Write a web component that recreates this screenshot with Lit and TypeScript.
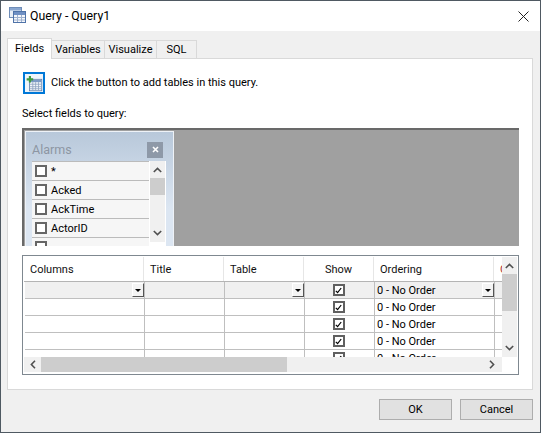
import { LitElement, html, css, svg } from "lit";
import { customElement } from "lit/decorators.js";

const chevron = (d: string) => html`<svg class="chev" width="9" height="6" viewBox="0 0 9 6"><path d=${d} fill="none" stroke="#505050" stroke-width="1.6"/></svg>`;
const up = () => chevron("M.8 5 4.5 1.4 8.2 5");
const down = () => chevron("M.8 1 4.5 4.6 8.2 1");
const side = (d: string) => html`<svg class="chev" width="6" height="9" viewBox="0 0 6 9"><path d=${d} fill="none" stroke="#505050" stroke-width="1.6"/></svg>`;

const gridIcon = svg`
  <rect x="5.5" y="6.5" width="15" height="14" fill="#f4f7fb" stroke="#5f7ea8"/>
  <rect x="6" y="7" width="14" height="3" fill="#7d9bc6"/>
  <path d="M6 12.5h14M6 15.5h14M6 18h14M9.5 10v10M13 10v10M16.5 10v10" stroke="#8ea3c0" stroke-width="1"/>`;

@customElement("app-root")
export class AppRoot extends LitElement {
  static styles = css`
    :host { display: block; width: 541px; height: 433px; font-family: Roboto, "Noto Sans", sans-serif; font-size: 11px; color: #000; }
    * { box-sizing: border-box; }
    .win { width: 541px; height: 433px; border: 1px solid #4f5962; background: #f0f0f0; display: flex; flex-direction: column; overflow: hidden; }
    .title { height: 30px; flex: none; background: #fff; display: flex; align-items: center; padding-left: 8px; gap: 4px; font-size: 12.3px; }
    .title .ico { margin-top: -3px; }
    .title .x { margin-left: auto; margin-right: 11px; display: flex; }
    .tabs { display: flex; align-items: flex-end; height: 27px; padding-left: 6px; flex: none; }
    .tab { height: 18px; background: #f0f0f0; border: 1px solid #d9d9d9; border-bottom: none; border-left: none; display: flex; align-items: center; justify-content: center; }
    .tab.on { height: 21px; width: 45px; background: #fff; border: 1px solid #d9d9d9; border-bottom: none; position: relative; top: 1px; z-index: 1; padding-bottom: 1px; }
    .panel { margin: 0 7px 0 6px; height: 332px; background: #fff; border: 1px solid #d9d9d9; flex: none; padding: 13px 13px 0 14px; }
    .hint { display: flex; align-items: center; gap: 6px; height: 22px; padding-bottom: 1px; padding-left: 1px; }
    .addbtn { width: 22px; height: 22px; border: 2px solid #0078d7; display: flex; align-items: center; justify-content: center; background: #eef5fc; flex: none; margin-bottom: -1px; }
    .lbl { margin-top: 12px; height: 16px; line-height: 16px; }
    .canvas { margin-top: 6px; width: 497px; height: 118px; background: #a0a0a0; border-top: 2px solid #696969; border-left: 2px solid #696969; padding: 1px 0 0 1px; overflow: hidden; }
    .fieldbox { width: 149px; height: 130px; background: linear-gradient(#b8c8da, #dce6f2 60%); border: 1px solid #eef2f7; padding: 9px 7px 0 6px; }
    .fb-head { display: flex; justify-content: space-between; align-items: center; height: 17px; padding-right: 3px; color: #8d96a3; font-size: 12.5px; }
    .fb-close { width: 16px; height: 16px; background: #8e99a8; display: flex; align-items: center; justify-content: center; }
    .list { margin-top: 3px; display: flex; background: #fff; width: 134px; height: 100px; padding-right: 1px; }
    .rows { width: 117px; border-top: 1px solid #bbb; }
    .frow { height: 19px; background: #f6f6f6; border-bottom: 1px solid #bbb; display: flex; align-items: center; padding-left: 3px; gap: 4px; }
    .fck { width: 12px; height: 12px; border: 2px solid #666; background: #fff; flex: none; }
    .vs { background: #f0f0f0; display: flex; flex-direction: column; align-items: center; width: 15px; flex: none; }
    .list .vs { margin-left: 1px; height: 81px; padding-top: 6px; }
    .list .thumb { width: 15px; height: 17px; background: #cdcdcd; margin-top: 5px; }
    .list .chev:last-child { margin-top: auto; margin-bottom: 6px; }
    .table { margin-top: 9px; width: 497px; height: 120px; border: 1px solid #7f8890; padding: 1px; position: relative; display: grid; grid-template-columns: 1fr 15px; grid-template-rows: 100px 15px; }
    .cells { overflow: hidden; }
    .tr { display: grid; grid-template-columns: 120px 80px 80px 70px 120px 20px; height: 17px; border-bottom: 1px solid #bfbfbf; margin-left: 1px; }
    .tr.head { height: 25px; margin-left: 0; border-bottom: 1px solid #b4b4b4; color: #111; }
    .tr.active { background: #f0f0f0; }
    .td { border-right: 1px solid #bfbfbf; display: flex; align-items: center; padding-left: 2px; min-width: 0; overflow: hidden; white-space: nowrap; }
    .head .td { border-right: 1px solid #e6e6e6; padding-left: 6px; }
    .td.center { justify-content: center; padding: 0 2px 0 0; }
    .head .td.center { padding: 0; }
    .tr .td:last-child { border-right: none; }
    .drop { margin-left: auto; width: 12px; height: 14px; flex: none; background: #f4f4f4; border: 1px solid; border-color: #fff #555 #555 #fff; display: flex; align-items: center; justify-content: center; }
    .drop i { width: 0; height: 0; border-left: 3px solid transparent; border-right: 3px solid transparent; border-top: 3px solid #000; }
    .red { color: #a33; padding-left: 6px !important; }
    .ck { width: 12px; height: 12px; border: 2px solid #606060; background: #fff; display: flex; align-items: center; justify-content: center; }
    .table .vs { padding-top: 6px; height: 100px; }
    .table .vs .thumb { width: 15px; height: 37px; background: #cdcdcd; margin-top: 5px; }
    .table .vs .chev:last-child { margin-top: auto; margin-bottom: 6px; }
    .hs { background: #f0f0f0; display: flex; align-items: center; grid-column: 1; }
    .hs .btn { width: 17px; display: flex; justify-content: center; flex: none; }
    .hs .thumb { width: 246px; height: 15px; background: #cdcdcd; }
    .hs .btn:last-child { margin-left: auto; width: 20px; }
    .corner { background: #fff; }
    .footer { display: flex; justify-content: flex-end; gap: 8px; padding: 9px 7px 0 0; }
    button { width: 73px; height: 21px; padding: 0; background: #e1e1e1; border: 1px solid #adadad; font: inherit; color: #000; }
  `;

  private dd() { return html`<span class="drop"><i></i></span>`; }
  private check() {
    return html`<span class="ck"><svg width="7" height="7" viewBox="0 0 7 7"><path d="M.8 3.8 2.6 5.6 6.2 1" fill="none" stroke="#000" stroke-width="1.2"/></svg></span>`;
  }

  render() {
    const fields = ["*", "Acked", "AckTime", "ActorID", ""];
    return html`
      <div class="win">
        <div class="title">
          <svg class="ico" width="17" height="17" viewBox="0 0 17 17">
            <rect x="0.5" y="1.5" width="12" height="10" fill="#e8eef6" stroke="#6f8db8"/>
            <rect x="1" y="2" width="11" height="2.5" fill="#8aa7d0"/>
            <rect x="4.5" y="5.5" width="12" height="11" fill="#f5f7fb" stroke="#4f73a8"/>
            <rect x="5" y="6" width="11" height="3" fill="#6f90c4"/>
            <path d="M5 11.5h11M5 14h11M8.5 9v7M12.5 9v7" stroke="#9fb2cf"/>
          </svg>
          <span>Query - Query1</span>
          <span class="x"><svg width="11" height="11" viewBox="0 0 11 11"><path d="M.5.5l10 10M10.5.5l-10 10" stroke="#222" stroke-width="1"/></svg></span>
        </div>
        <div class="tabs">
          <div class="tab on">Fields</div>
          <div class="tab" style="width:53px">Variables</div>
          <div class="tab" style="width:52px">Visualize</div>
          <div class="tab" style="width:40px">SQL</div>
        </div>
        <div class="panel">
          <div class="hint">
            <div class="addbtn">
              <svg width="18" height="18" viewBox="0 0 22 22" style="overflow:visible">
                ${gridIcon}
                <path d="M6 2.5v8M2 6.5h8" stroke="#3f9a3f" stroke-width="2.6"/>
              </svg>
            </div>
            <span>Click the button to add tables in this query.</span>
          </div>
          <div class="lbl">Select fields to query:</div>
          <div class="canvas">
            <div class="fieldbox">
              <div class="fb-head">
                <span>Alarms</span>
                <span class="fb-close"><svg width="7" height="7" viewBox="0 0 7 7"><path d="M1 1l5 5M6 1l-5 5" stroke="#fff" stroke-width="1.6"/></svg></span>
              </div>
              <div class="list">
                <div class="rows">
                  ${fields.map((f) => html`<div class="frow"><span class="fck"></span><span>${f}</span></div>`)}
                </div>
                <div class="vs">${up()}<div class="thumb"></div>${down()}</div>
              </div>
            </div>
          </div>
          <div class="table">
            <div class="cells">
              <div class="tr head">
                <div class="td">Columns</div><div class="td">Title</div><div class="td">Table</div>
                <div class="td center">Show</div><div class="td">Ordering</div><div class="td red">Group</div>
              </div>
              ${[0, 1, 2, 3, 4].map((i) => html`
                <div class="tr ${i === 0 ? "active" : ""}">
                  <div class="td">${i === 0 ? this.dd() : ""}</div>
                  <div class="td"></div>
                  <div class="td">${i === 0 ? this.dd() : ""}</div>
                  <div class="td center">${this.check()}</div>
                  <div class="td">0 - No Order${i === 0 ? this.dd() : ""}</div>
                  <div class="td"></div>
                </div>`)}
            </div>
            <div class="vs">${up()}<div class="thumb"></div>${down()}</div>
            <div class="hs">
              <span class="btn">${side("M5 .8 1.4 4.5 5 8.2")}</span>
              <div class="thumb"></div>
              <span class="btn">${side("M1 .8 4.6 4.5 1 8.2")}</span>
            </div>
            <div class="corner"></div>
          </div>
        </div>
        <div class="footer"><button>OK</button><button>Cancel</button></div>
      </div>
    `;
  }
}
